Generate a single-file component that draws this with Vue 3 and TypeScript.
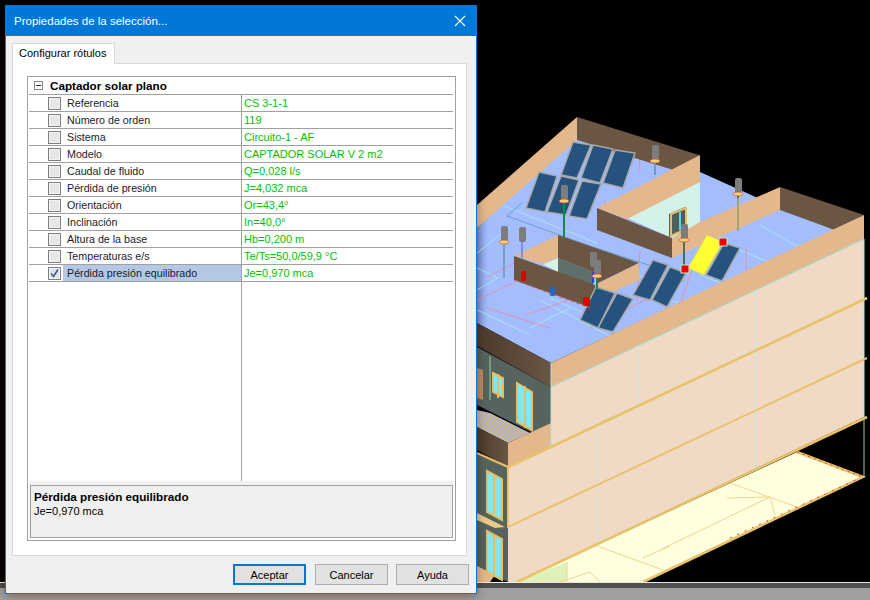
<template>
  <div class="desktop">
    <svg class="scene" width="870" height="600" viewBox="0 0 870 600">
      <defs>
        <linearGradient id="floorShade" x1="0" x2="1" y1="0" y2="0">
          <stop offset="0" stop-color="#4a5590" stop-opacity="0.55" />
          <stop offset="1" stop-color="#a3bdff" stop-opacity="0" />
        </linearGradient>
        <linearGradient id="wallShade" x1="0" x2="1" y1="0" y2="0">
          <stop offset="0" stop-color="#4a3a2c" />
          <stop offset="1" stop-color="#6b5644" />
        </linearGradient>
        <pattern id="balconyHatch" width="3" height="3" patternUnits="userSpaceOnUse">
          <rect width="3" height="3" fill="#aeb0c8" />
          <path d="M0,3 L3,0" stroke="#e0bf70" stroke-width="1" />
        </pattern>
      </defs>

      <!-- roof floor -->
      <polygon fill="#a3bdff" points="477,228 577,135 700,172 780,208 835,230 551,363 477,323" />
      <polygon fill="url(#floorShade)" points="477,228 490,216 490,330 477,323" />

      <!-- pipes on the floor -->
      <g fill="none" stroke="#a8e6f0" stroke-width="1">
        <path d="M477,253 L510,227 M504,206 L597,243 M477,268 L498,278 L477,290 M590,253 L670,290 M645,290 L700,312 M540,300 L610,336 M477,310 L530,335 M530,328 L570,308 M550,298 L600,320" />
        <path d="M760,225 L800,248 M740,250 L782,268 M700,275 L740,290 M690,300 L720,312" />
      </g>
      <g fill="none" stroke="#e58fb0" stroke-width="1">
        <path d="M487,277 L517,262 M487,308 L550,328 M525,315 L570,300 M640,251 L637,300 M610,230 L642,210 L640,203 L613,222 M639,145 L640,172 M605,200 L606,225" />
        <path d="M590,328 L685,280 M692,270 L680,305 M700,270 L740,290 L700,312 M746,247 L746,270" />
      </g>
      <path d="M507,216 L523,202 M507,216 L590,246 L670,272" fill="none" stroke="#6f9fc8" stroke-width="1" />

      <!-- back parapets -->
      <polygon fill="#e3b88c" points="477,205 577,117 577,140 477,228" />
      <polygon fill="#6b5644" points="577,117 699,155 699,178 577,140" />
      <polygon fill="#6b5644" points="780,187 864,215 835,230 780,210" />

      <!-- solar panels, back group -->
      <polygon v-for="(p, i) in panels" :key="i" :points="p" fill="#26527e" stroke="#a9a9a9" stroke-width="1.5" />

      <!-- upper room -->
      <polygon fill="#d4f2ea" points="625,217 700,180 700,224 672,238" />
      <polygon fill="#e3b88c" points="597,208 700,155 700,182 627,219" />
      <polygon fill="#6b5644" points="597,208 672,238 672,258 597,230" />
      <polygon fill="#e3b88c" points="672,238 700,222 780,187 780,210 672,258" />
      <polygon fill="#4e5f5c" points="669,214 685,207 685,231 669,237" />
      <polygon fill="none" stroke="#e6bf6d" stroke-width="2" points="671,214 686,208 686,229 671,236" />
      <path d="M680,212 L680,230" stroke="#55d8e8" stroke-width="2" />

      <!-- middle room -->
      <polygon fill="#d4f2ea" points="543,264 558,258 558,272" />
      <polygon fill="#5f6f6c" points="558,258 593,272 593,290 558,272" />
      <polygon fill="#6b5644" points="558,235 639,263 598,283 593,272 558,258" />
      <polygon fill="#e3b88c" points="514,256 558,235 558,258 543,264" />
      <polygon fill="#6b5644" points="514,256 595,285 595,309 514,280" />
      <polygon fill="#e3b88c" points="639,263 639,280 604,296 595,285" />
      <path d="M593,272 L593,283" stroke="#2f3fd0" stroke-width="2" />

      <!-- solar panels, front groups -->
      <polygon v-for="(p, i) in frontPanels" :key="i" :points="p" fill="#26527e" stroke="#a9a9a9" stroke-width="1.5" />

      <!-- selected panel -->
      <polygon fill="#ffff33" stroke="#d8d860" points="707,235 723,242 704,275 688,268" />
      <polygon fill="#26527e" stroke="#a9a9a9" stroke-width="1.5" points="724,243 740,248 722,281 706,275" />

      <!-- pipe risers and vents -->
      <g fill="none" stroke-width="2">
        <path d="M655,160 L655,175" stroke="#6f9fb8" />
        <path d="M564,200 L564,237" stroke="#118a4a" />
        <path d="M504,240 L504,278" stroke="#7aa2b8" />
        <path d="M522,240 L522,258" stroke="#7f8cf0" />
        <path d="M738,195 L738,231" stroke="#a3a56a" />
        <path d="M738,190 L738,198" stroke="#118a4a" />
        <path d="M684,240 L684,266" stroke="#4e6f5a" />
        <path d="M597,272 L597,290" stroke="#118a4a" />
      </g>
      <g v-for="(v, i) in vents" :key="i">
        <rect :x="v[0] - 3" :y="v[1] - 8" width="7" height="15" rx="2" fill="#7d7d7d" />
        <ellipse v-if="v[2]" :cx="v[0]" :cy="v[1] + 8" rx="5" ry="2" fill="#f0d070" stroke="#d23" stroke-width="0.5" />
      </g>

      <!-- tanks -->
      <rect x="521" y="271" width="5" height="10" rx="1.5" fill="#e00000" />
      <rect x="583" y="297" width="7" height="9" rx="2" fill="#e00000" />
      <rect x="550" y="287" width="5" height="9" rx="1.5" fill="#1769d0" />
      <path d="M514,280 L590,308" fill="none" stroke="#c86060" stroke-width="1" stroke-dasharray="4 2" />
      <path d="M477,300 L517,281" fill="none" stroke="#e58fb0" stroke-width="1" />

      <!-- front parapet -->
      <polygon fill="url(#wallShade)" points="477,323 551,363 551,387 477,346" />
      <polygon fill="#e3b88c" points="551,363 864,215 864,239 551,387" />

      <!-- left facade -->
      <polygon fill="#56635f" points="477,347 551,387 551,423 533,433 477,405" />
      <polygon fill="url(#balconyHatch)" points="477,410 490,413 530,433 508,443 477,427" />
      <polygon fill="url(#wallShade)" points="477,427 508,443 508,467 477,450" />
      <polygon fill="#e3b88c" points="508,443 551,423 551,447 508,467" />
      <polygon fill="#56635f" points="477,453 508,468 508,582 477,567" />
      <polygon fill="#e3b88c" points="477,566 495,575 490,582 477,582" />
      <polygon fill="#e8c98a" points="477,513 505,527 495,528 477,520" />
      <polygon fill="#c08a60" points="477,368 483,370 483,400 477,398" />
      <path d="M490,356 L490,400" stroke="#8fcf9f" stroke-width="1" />
      <g v-for="(w, i) in windows" :key="i">
        <polygon :points="w" fill="#7fe8f4" stroke="#e3bf63" stroke-width="2" />
      </g>
      <path d="M498,374 L498,398 M525,386 L525,428 M494,474 L494,514 M494,534 L494,574" stroke="#e3bf63" stroke-width="2" />

      <!-- main facade -->
      <polygon fill="#f0d9c5" points="551,387 864,239 864,417 517,582 508,582 508,467 551,447" />
      <path d="M638,345 L638,406 M598,425 L598,546 M755,290 L755,470" stroke="#c9e8dc" stroke-width="1" fill="none" />
      <path d="M551,387 L864,239 L864,417 M551,363 L551,447 M508,467 L508,527" stroke="#a8e6e0" stroke-width="1" fill="none" />

      <!-- ground deck -->
      <polygon fill="#ffffe0" points="797,452 863,477 643,582 517,582" />
      <polygon fill="#dff0b8" points="517,582 567,562 567,582" />
      <path d="M567,562 L567,582 M597,546 L663,570 M730,483 L797,507 M770,497 L660,550 M770,497 L775,515 M727,498 L770,497 M643,558 L670,546 M560,582 L590,572 L600,582" stroke="#eed590" stroke-width="1" fill="none" />

      <!-- floor bands -->
      <g fill="none" stroke="#e8c268" stroke-width="2.5">
        <path d="M508,467 L551,447 L867,298" />
        <path d="M477,453 L508,467 L508,527 L867,358" stroke-width="2" />
        <path d="M517,582 L867,417" />
        <path d="M797,452 L863,477 L643,582" />
      </g>
      <path d="M864,417 L864,476" stroke="#9fc88a" stroke-width="1" />
      <path d="M797,452 L863,477" stroke="#e04040" stroke-width="1" stroke-dasharray="2 4" fill="none" />
      <path d="M730,538 L860,478" stroke="#e04040" stroke-width="1" stroke-dasharray="2 6" fill="none" />

      <!-- grip handles -->
      <rect x="681" y="265" width="8" height="8" fill="#f00000" stroke="#bff0c0" />
      <rect x="719" y="238" width="8" height="8" fill="#f00000" stroke="#bff0c0" />

      <!-- status strip of the host window -->
      <rect x="0" y="582" width="870" height="1" fill="#e8e8e8" />
      <rect x="0" y="583" width="870" height="5" fill="#505050" />
      <rect x="0" y="588" width="870" height="12" fill="#a0a0a0" />
    </svg>

    <div class="dialog">
      <div class="titlebar">
        <span class="title">Propiedades de la selección...</span>
        <svg class="close" width="12" height="12" viewBox="0 0 12 12">
          <path d="M1,1 L11,11 M11,1 L1,11" stroke="#fff" stroke-width="1.1" fill="none" />
        </svg>
      </div>
      <div class="content">
        <div class="tabs"><div class="tab">Configurar rótulos</div></div>
        <div class="panel">
          <div class="tree">
            <div class="group">
              <span class="collapse"></span>
              <span class="group-name">Captador solar plano</span>
            </div>
            <div class="rows">
              <div v-for="row in rows" :key="row.label" class="row" :class="{ selected: row.checked }">
                <span class="check" :class="{ on: row.checked }">
                  <svg v-if="row.checked" width="11" height="11" viewBox="0 0 11 11">
                    <path d="M2,5.5 L4.5,8.5 L9,1.5" stroke="#46587c" stroke-width="1.6" fill="none" />
                  </svg>
                </span>
                <span class="label">{{ row.label }}</span>
                <span class="value">{{ row.value }}</span>
              </div>
              <div class="filler"></div>
            </div>
            <div class="info">
              <div class="info-box">
                <div class="info-title">{{ selected.label }}</div>
                <div class="info-value">{{ selected.value }}</div>
              </div>
            </div>
          </div>
        </div>
        <div class="buttons">
          <button class="btn primary">Aceptar</button>
          <button class="btn">Cancelar</button>
          <button class="btn last">Ayuda</button>
        </div>
      </div>
    </div>
  </div>
</template>

<script setup lang="ts">
import { computed } from "vue";

type Row = { label: string; value: string; checked?: boolean };

const rows: Row[] = [
  { label: "Referencia", value: "CS 3-1-1" },
  { label: "Número de orden", value: "119" },
  { label: "Sistema", value: "Circuito-1 - AF" },
  { label: "Modelo", value: "CAPTADOR SOLAR V 2 m2" },
  { label: "Caudal de fluido", value: "Q=0,028 l/s" },
  { label: "Pérdida de presión", value: "J=4,032 mca" },
  { label: "Orientación", value: "Or=43,4°" },
  { label: "Inclinación", value: "In=40,0°" },
  { label: "Altura de la base", value: "Hb=0,200 m" },
  { label: "Temperaturas e/s", value: "Te/Ts=50,0/59,9 °C" },
  { label: "Pérdida presión equilibrado", value: "Je=0,970 mca", checked: true },
];

const selected = computed(() => rows.find((r) => r.checked) as Row);

const panels = [
  "573,142 591,145 577,178 561,175",
  "593,145 613,149 600,183 581,178",
  "615,150 635,153 623,188 603,183",
  "539,172 557,176 545,212 526,208",
  "561,176 579,180 566,215 547,212",
  "582,181 601,184 587,219 569,216",
];

const frontPanels = [
  "596,287 615,293 598,328 580,320",
  "617,293 633,299 613,332 598,328",
  "653,260 668,265 650,300 633,295",
  "670,267 686,273 667,307 652,300",
];

// x, y, has a collar
const vents: number[][] = [
  [655, 153, 1],
  [564, 193, 1],
  [504, 234, 1],
  [522, 235, 0],
  [593, 260, 0],
  [597, 268, 1],
  [684, 232, 1],
  [738, 186, 1],
];

const windows = [
  "493,373 503,378 503,397 493,392",
  "517,383 532,392 532,430 517,422",
  "487,471 502,479 502,520 487,512",
  "487,531 502,539 502,580 487,572",
];
</script>

<style>
html,
body {
  margin: 0;
  background: #000;
}
</style>

<style scoped>
.desktop {
  position: relative;
  width: 870px;
  height: 600px;
  overflow: hidden;
  background: #000;
  font-family: "Liberation Sans", Arial, sans-serif;
  font-size: 11px;
  color: #000;
}

.scene {
  position: absolute;
  left: 0;
  top: 0;
}

.dialog {
  position: absolute;
  left: 5px;
  top: 5px;
  width: 472px;
  height: 589px;
  box-sizing: border-box;
  border: 1px solid #0078d7;
  background: #f0f0f0;
  display: flex;
  flex-direction: column;
  box-shadow: 0 2px 10px rgba(0, 0, 0, 0.35);
}

.titlebar {
  height: 30px;
  flex: none;
  background: #0078d7;
  color: #fff;
  display: flex;
  align-items: center;
  justify-content: space-between;
  padding: 0 10px 0 8px;
}

.title {
  font-size: 11.5px;
}

.content {
  flex: 1;
  display: flex;
  flex-direction: column;
  padding: 7px 9px 0 6px;
}

.tabs {
  display: flex;
  height: 20px;
}

.tab {
  width: 103px;
  box-sizing: border-box;
  height: 21px;
  border: 1px solid #d9d9d9;
  border-bottom: none;
  background: #fff;
  padding-left: 6px;
  font-size: 11px;
  line-height: 19px;
  white-space: nowrap;
  position: relative;
  z-index: 1;
}

.panel {
  height: 493px;
  box-sizing: border-box;
  border: 1px solid #d9d9d9;
  background: #fff;
  padding: 12px 10px 14px 14px;
}

.tree {
  height: 100%;
  box-sizing: border-box;
  border: 1px solid #a0a0a0;
  display: flex;
  flex-direction: column;
  padding: 0 2px 2px 1px;
}

.group {
  height: 17px;
  flex: none;
  display: flex;
  align-items: center;
  padding-left: 5px;
  border-bottom: 1px solid #a0a0a0;
}

.collapse {
  position: relative;
  width: 9px;
  height: 9px;
  box-sizing: border-box;
  border: 1px solid #8a8a8a;
  margin-right: 7px;
}

.collapse::after {
  content: "";
  position: absolute;
  left: 1px;
  right: 1px;
  top: 3px;
  height: 1px;
  background: #333;
}

.group-name {
  font-size: 11.7px;
  font-weight: 700;
}

.rows {
  flex: 1;
  display: flex;
  flex-direction: column;
}

.row {
  height: 17px;
  box-sizing: border-box;
  flex: none;
  display: grid;
  grid-template-columns: 213px 1fr;
  border-bottom: 1px solid #a0a0a0;
  align-items: stretch;
  position: relative;
}

.check {
  position: absolute;
  left: 19px;
  top: 2px;
  width: 13px;
  height: 13px;
  box-sizing: border-box;
  border: 1px solid #7e7e7e;
  background: #e6e6e6;
  box-shadow: inset 0 0 0 1px #f4f4f4;
  display: flex;
  align-items: center;
  justify-content: center;
}

.check.on {
  background: #dde3ee;
}

.label {
  padding-left: 38px;
  font-size: 10.7px;
  line-height: 16px;
  border-right: 1px solid #a0a0a0;
  color: #1b1b2b;
}

.row.selected .label {
  background: linear-gradient(#b4c8e6, #b4c8e6) no-repeat 34px 0 / 178px 100%;
}

.value {
  padding-left: 2px;
  line-height: 16px;
  color: #00c400;
}

.filler {
  flex: 1;
  width: 213px;
  box-sizing: border-box;
  border-right: 1px solid #a0a0a0;
}

.info {
  height: 57px;
  flex: none;
  box-sizing: border-box;
  background: #f0f0f0;
  padding-top: 4px;
  padding-left: 1px;
}

.info-box {
  height: 53px;
  box-sizing: border-box;
  border: 1px solid #a0a0a0;
  padding: 3px;
}

.info-title {
  font-size: 11.7px;
  font-weight: 700;
  line-height: 15px;
}

.info-value {
  line-height: 15px;
}

.buttons {
  display: flex;
  justify-content: flex-end;
  gap: 9px;
  margin-top: 8px;
  margin-right: -2px;
}

.btn {
  width: 73px;
  height: 21px;
  box-sizing: border-box;
  border: 1px solid #adadad;
  background: #e1e1e1;
  font: inherit;
  font-size: 11px;
  color: #000;
  padding: 0;
}

.btn.last {
  margin-left: -1px;
}

.btn.primary {
  border: 2px solid #0078d7;
}
</style>
